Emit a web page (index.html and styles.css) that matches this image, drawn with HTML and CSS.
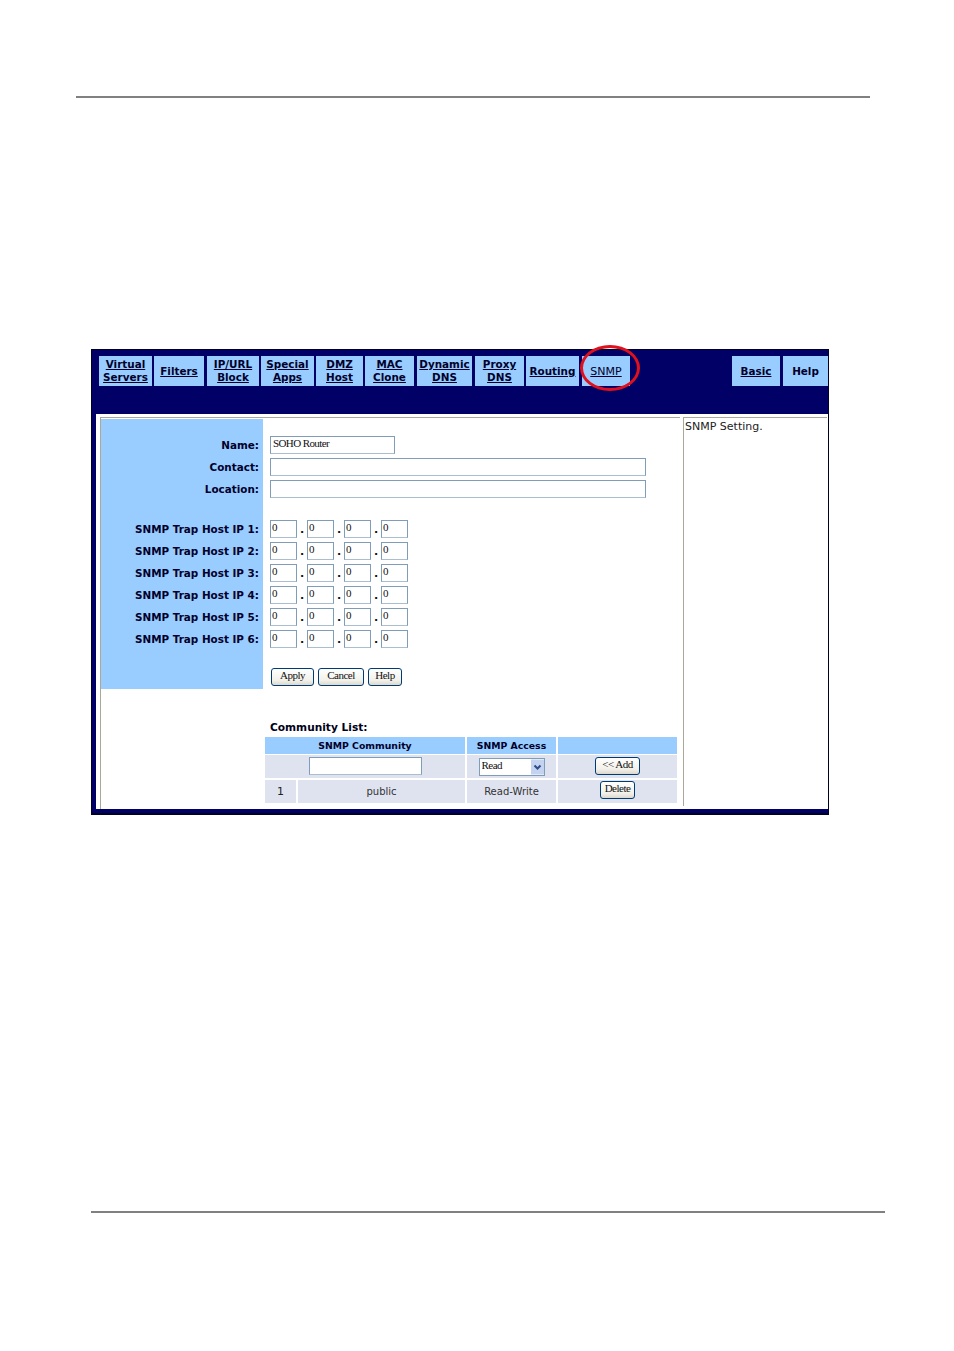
FILE: index.html
```html
<!DOCTYPE html>
<html lang="en">
<head>
<meta charset="utf-8">
<title>SNMP Setting</title>
<link rel="stylesheet" href="styles.css">
</head>
<body>
<hr class="rule rule-top">
<div class="app">
  <nav class="tabs">
    <a class="tab t1" href="#">Virtual<br>Servers</a>
    <a class="tab t2" href="#">Filters</a>
    <a class="tab t3" href="#">IP/URL<br>Block</a>
    <a class="tab t4" href="#">Special<br>Apps</a>
    <a class="tab t5" href="#">DMZ<br>Host</a>
    <a class="tab t6" href="#">MAC<br>Clone</a>
    <a class="tab t7" href="#">Dynamic<br>DNS</a>
    <a class="tab t8" href="#">Proxy<br>DNS</a>
    <a class="tab t9" href="#">Routing</a>
    <a class="tab t10 current" href="#">SNMP</a>
    <a class="tab t11" href="#">Basic</a>
    <span class="tab t12 plain">Help</span>
  </nav>
  <div class="circle"></div>
  <div class="panel">
    <main class="frame-main">
      <form class="form">
        <div class="label label-pad"></div><div></div>
        <div class="label">Name:</div>
        <div class="field"><input class="text w-name" value="SOHO Router"></div>
        <div class="label">Contact:</div>
        <div class="field"><input class="text w-long"></div>
        <div class="label">Location:</div>
        <div class="field"><input class="text w-long"></div>
        <div class="label label-gap"></div><div></div>
        <div class="label">SNMP Trap Host IP 1:</div>
        <div class="field"><input class="text ip" value="0"><span class="dot">.</span><input class="text ip" value="0"><span class="dot">.</span><input class="text ip" value="0"><span class="dot">.</span><input class="text ip" value="0"></div>
        <div class="label">SNMP Trap Host IP 2:</div>
        <div class="field"><input class="text ip" value="0"><span class="dot">.</span><input class="text ip" value="0"><span class="dot">.</span><input class="text ip" value="0"><span class="dot">.</span><input class="text ip" value="0"></div>
        <div class="label">SNMP Trap Host IP 3:</div>
        <div class="field"><input class="text ip" value="0"><span class="dot">.</span><input class="text ip" value="0"><span class="dot">.</span><input class="text ip" value="0"><span class="dot">.</span><input class="text ip" value="0"></div>
        <div class="label">SNMP Trap Host IP 4:</div>
        <div class="field"><input class="text ip" value="0"><span class="dot">.</span><input class="text ip" value="0"><span class="dot">.</span><input class="text ip" value="0"><span class="dot">.</span><input class="text ip" value="0"></div>
        <div class="label">SNMP Trap Host IP 5:</div>
        <div class="field"><input class="text ip" value="0"><span class="dot">.</span><input class="text ip" value="0"><span class="dot">.</span><input class="text ip" value="0"><span class="dot">.</span><input class="text ip" value="0"></div>
        <div class="label">SNMP Trap Host IP 6:</div>
        <div class="field"><input class="text ip" value="0"><span class="dot">.</span><input class="text ip" value="0"><span class="dot">.</span><input class="text ip" value="0"><span class="dot">.</span><input class="text ip" value="0"></div>
        <div class="label label-gap2"></div><div></div>
        <div class="label label-btn"></div>
        <div class="buttons">
          <button type="button" class="btn b-apply">Apply</button>
          <button type="button" class="btn b-cancel">Cancel</button>
          <button type="button" class="btn b-help">Help</button>
        </div>
      </form>
      <h2 class="list-title">Community List:</h2>
      <div class="grid">
        <div class="th span2">SNMP Community</div>
        <div class="th">SNMP Access</div>
        <div class="th"></div>
        <div class="td span2"><input class="text w-comm lift"></div>
        <div class="td">
          <div class="select-wrap">
            <select class="select"><option>Read</option><option>Read-Write</option></select>
            <svg class="arrow" viewBox="0 0 13 15" width="13" height="15" aria-hidden="true"><rect width="13" height="15" fill="#c3d3f0"/><path d="M3.5 6 L6.5 9 L9.5 6" fill="none" stroke="#2f4d8a" stroke-width="2"/></svg>
          </div>
        </div>
        <div class="td"><button type="button" class="btn b-add lift">&lt;&lt; Add</button></div>
        <div class="td last">1</div>
        <div class="td last thin">public</div>
        <div class="td last thin">Read-Write</div>
        <div class="td last"><button type="button" class="btn b-del">Delete</button></div>
      </div>
    </main>
    <aside class="frame-side">SNMP Setting.</aside>
  </div>
</div>
<hr class="rule rule-bottom">
</body>
</html>
```

FILE: styles.css
```css
html, body {
  margin: 0;
  padding: 0;
  background: #fff;
}
body {
  height: 1351px;
  overflow: hidden;
  font-family: "DejaVu Sans", Verdana, sans-serif;
  color: #00002a;
}
.rule {
  border: 0;
  height: 1px;
  background: #808080;
  margin: 0;
}
.rule-top {
  width: 794px;
  margin: 96px 0 0 76px;
  height: 2px;
}
.rule-bottom {
  width: 794px;
  margin: 396px 0 0 91px;
  height: 2px;
}
.app {
  position: relative;
  box-sizing: border-box;
  width: 738px;
  height: 466px;
  margin: 251px 0 0 91px;
  background: #000066;
  border: 1px solid #000022;
  border-bottom-width: 2px;
}
.tabs {
  display: flex;
  height: 30px;
  margin-top: 6px;
  padding-left: 7px;
}
.tab {
  box-sizing: border-box;
  height: 30px;
  flex: none;
  display: flex;
  align-items: center;
  justify-content: center;
  text-align: center;
  background: #99ccff;
  color: #00002a;
  font-size: 10.4px;
  font-weight: 700;
  line-height: 13px;
  text-decoration: underline;
  white-space: nowrap;
}
.plain { text-decoration: none; }
.current { font-weight: 400; font-size: 11px; }
.t1 { width: 53px; margin-right: 2px; }
.t2 { width: 50px; margin-right: 3px; }
.t3 { width: 52px; margin-right: 2px; }
.t4 { width: 53px; margin-right: 2px; }
.t5 { width: 47px; margin-right: 2px; }
.t6 { width: 49px; margin-right: 3px; }
.t7 { width: 55px; margin-right: 3px; }
.t8 { width: 49px; margin-right: 2px; }
.t9 { width: 53px; margin-right: 3px; }
.t10 { width: 48px; margin-right: 102px; }
.t11 { width: 48px; margin-right: 3px; }
.t12 { width: 45px; }
.circle {
  position: absolute;
  left: 488px;
  top: -5px;
  width: 60px;
  height: 46px;
  box-sizing: border-box;
  border: 3px solid #e0101c;
  border-radius: 50%;
}
.panel {
  display: flex;
  gap: 3px;
  box-sizing: border-box;
  height: 395px;
  margin: 28px 0 0 4px;
  padding: 3px 0 0 4px;
  background: #fff;
}
.frame-main {
  box-sizing: border-box;
  width: 580px;
  border-top: 1px solid #aca899;
  border-left: 1px solid #aca899;
  padding-top: 1px;
}
.frame-side {
  box-sizing: border-box;
  width: 144px;
  height: 389px;
  border-top: 1px solid #aca899;
  border-left: 1px solid #aca899;
  padding: 2px 0 0 1px;
  font-size: 11px;
  line-height: 13px;
  color: #222;
}
.form {
  display: grid;
  grid-template-columns: 162px 1fr;
  grid-template-rows: 15px repeat(3, 22px) 18px repeat(6, 22px) 16px 23px;
}
.label {
  box-sizing: border-box;
  background: #99ccff;
  padding: 1px 4px 0 0;
  font-size: 10.4px;
  font-weight: 700;
  line-height: 21px;
  text-align: right;
  color: #00002a;
  white-space: nowrap;
}
.field {
  display: flex;
  align-items: flex-start;
  padding: 2px 0 0 7px;
}
.text {
  box-sizing: border-box;
  height: 18px;
  margin: 0;
  padding: 0 0 5px 2px;
  border: 1px solid #7f9db9;
  border-bottom-color: #a9bfd0;
  border-radius: 0;
  background: #fff;
  outline: 0;
  font-family: "Liberation Serif", "Times New Roman", serif;
  font-size: 11px;
  letter-spacing: -0.6px;
  color: #111;
}
.w-name { width: 125px; }
.w-long { width: 376px; }
.w-comm { width: 113px; }
.ip { width: 27px; padding-left: 1px; }
.dot {
  width: 10px;
  font-size: 11px;
  font-weight: 700;
  line-height: 19px;
  text-align: center;
  color: #111;
}
.buttons {
  display: flex;
  gap: 4px;
  padding: 2px 0 0 8px;
}
.btn {
  box-sizing: border-box;
  height: 18px;
  margin: 0;
  padding: 0 0 4px;
  border: 1px solid #003c74;
  border-radius: 3px;
  background: linear-gradient(#ffffff, #f2f1ea 70%, #dcd8ce);
  font-family: "Liberation Serif", "Times New Roman", serif;
  font-size: 11px;
  letter-spacing: -0.5px;
  line-height: 12px;
  color: #111;
  white-space: nowrap;
}
.b-apply { width: 43px; }
.b-cancel { width: 46px; }
.b-help { width: 34px; }
.b-add { width: 45px; }
.b-del { width: 35px; margin-bottom: 3px; }
.lift { margin-bottom: 1px; }
.list-title {
  margin: 31px 0 0;
  padding-left: 169px;
  height: 17px;
  font-size: 10.6px;
  font-weight: 700;
  line-height: 14px;
  color: #00001a;
}
.grid {
  display: grid;
  grid-template-columns: 31px 167px 89px 119px;
  grid-template-rows: 17px 23px 24px;
  column-gap: 2px;
  row-gap: 1px;
  margin-left: 164px;
}
.span2 { grid-column: span 2; }
.th {
  background: #99ccff;
  font-size: 9.3px;
  font-weight: 700;
  line-height: 17px;
  text-align: center;
  white-space: nowrap;
}
.td {
  display: flex;
  align-items: center;
  justify-content: center;
  background: #dfe3f0;
  font-size: 11px;
  color: #222;
}
.last { margin-top: 1px; }
.thin {
  font-size: 10px;
  font-weight: 400;
  color: #333;
}
.select-wrap {
  position: relative;
  width: 66px;
  height: 18px;
}
.select {
  box-sizing: border-box;
  display: block;
  width: 100%;
  height: 100%;
  margin: 0;
  padding: 0 0 3px 2px;
  appearance: none;
  -webkit-appearance: none;
  border: 1px solid #7f9db9;
  border-radius: 0;
  background: #fff;
  font-family: "Liberation Serif", "Times New Roman", serif;
  font-size: 11px;
  letter-spacing: -0.5px;
  color: #111;
}
.arrow {
  position: absolute;
  right: 1px;
  top: 1px;
  height: 16px;
  pointer-events: none;
}
```
